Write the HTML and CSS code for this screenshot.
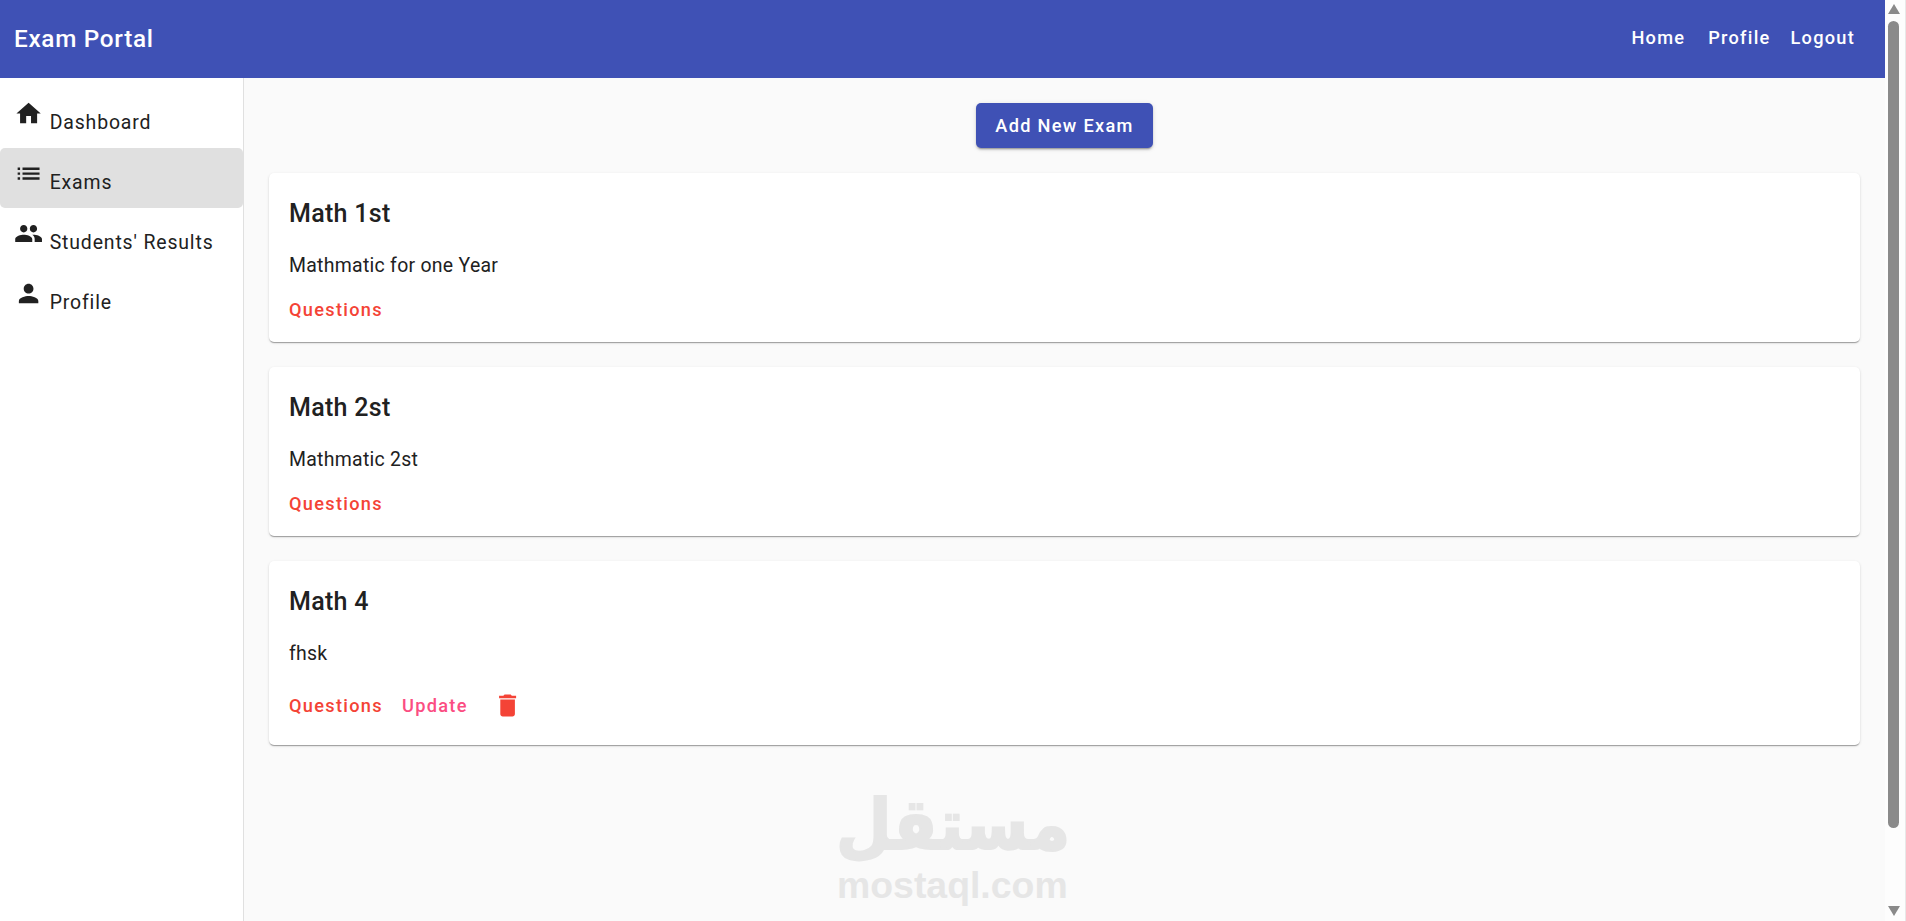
FILE: index.html
```html
<!DOCTYPE html>
<html lang="en">
<head>
<meta charset="utf-8">
<title>Exam Portal</title>
<link rel="stylesheet" href="styles.css">
</head>
<body>
<div class="window">
  <div class="app">
    <header class="topbar">
      <div class="brand">Exam Portal</div>
      <nav class="topnav">
        <a class="topnav-link topnav-home">Home</a>
        <a class="topnav-link">Profile</a>
        <a class="topnav-link">Logout</a>
      </nav>
    </header>
    <div class="body-row">
      <aside class="sidebar">
        <a class="side-item">
          <svg class="side-icon" viewBox="0 0 24 24"><path d="M10 20v-6h4v6h5v-8h3L12 3 2 12h3v8z"/></svg>
          <span class="side-label">Dashboard</span>
        </a>
        <a class="side-item side-item-active">
          <svg class="side-icon" viewBox="0 0 24 24"><path d="M3 13h2v-2H3v2zm0 4h2v-2H3v2zm0-8h2V7H3v2zm4 4h14v-2H7v2zm0 4h14v-2H7v2zM7 7v2h14V7H7z"/></svg>
          <span class="side-label">Exams</span>
        </a>
        <a class="side-item">
          <svg class="side-icon" viewBox="0 0 24 24"><path d="M16 11c1.66 0 2.99-1.34 2.99-3S17.66 5 16 5c-1.66 0-3 1.34-3 3s1.34 3 3 3zm-8 0c1.66 0 2.99-1.34 2.99-3S9.66 5 8 5C6.34 5 5 6.34 5 8s1.34 3 3 3zm0 2c-2.33 0-7 1.17-7 3.5V19h14v-2.5c0-2.33-4.67-3.5-7-3.5zm8 0c-.29 0-.62.02-.97.05 1.16.84 1.97 1.97 1.97 3.45V19h6v-2.5c0-2.33-4.67-3.5-7-3.5z"/></svg>
          <span class="side-label">Students' Results</span>
        </a>
        <a class="side-item">
          <svg class="side-icon" viewBox="0 0 24 24"><path d="M12 12c2.21 0 4-1.79 4-4s-1.79-4-4-4-4 1.79-4 4 1.79 4 4 4zm0 2c-2.67 0-8 1.34-8 4v2h16v-2c0-2.66-5.33-4-8-4z"/></svg>
          <span class="side-label">Profile</span>
        </a>
      </aside>
      <main class="content">
        <div class="toolbar"><button class="add-btn">Add New Exam</button></div>
        <section class="card">
          <h2 class="card-title">Math 1st</h2>
          <p class="card-text">Mathmatic for one Year</p>
          <div class="card-actions"><a class="action action-red">Questions</a></div>
        </section>
        <section class="card">
          <h2 class="card-title">Math 2st</h2>
          <p class="card-text">Mathmatic 2st</p>
          <div class="card-actions"><a class="action action-red">Questions</a></div>
        </section>
        <section class="card">
          <h2 class="card-title">Math 4</h2>
          <p class="card-text">fhsk</p>
          <div class="card-actions">
            <a class="action action-red">Questions</a>
            <a class="action action-pink">Update</a>
            <svg class="trash-icon" viewBox="0 0 24 24"><path d="M6 19c0 1.1.9 2 2 2h8c1.1 0 2-.9 2-2V7H6v12zM19 4h-3.5l-1-1h-5l-1 1H5v2h14V4z"/></svg>
          </div>
        </section>
        <div class="watermark">
          <div class="watermark-ar" lang="ar" dir="rtl">مستقل</div>
          <div class="watermark-en">mostaql.com</div>
        </div>
      </main>
    </div>
  </div>
  <div class="scrollbar">
    <div class="arrow-up"></div>
    <div class="thumb"></div>
    <div class="arrow-down"></div>
  </div>
</div>
</body>
</html>
```
FILE: styles.css
```css
* { box-sizing: border-box; }
html, body { margin: 0; height: 100%; overflow: hidden; }
body { font-family: Roboto, "Liberation Sans", sans-serif; background: #fafafa; color: #212121; }
.window { display: flex; height: 921px; width: 1906px; }
.app { flex: 1; min-width: 0; display: flex; flex-direction: column; }

.topbar { height: 78px; background: #3f51b5; color: #fff; display: flex; align-items: center; justify-content: space-between; padding: 0 30px 1px 14px; }
.brand { font-size: 24.3px; font-weight: 500; letter-spacing: 0.7px; }
.topnav { display: flex; gap: 20px; padding-bottom: 2px; }
.topnav-link { font-size: 18.2px; font-weight: 500; letter-spacing: 1.25px; }
.topnav-home { margin-right: 3px; }

.body-row { flex: 1; display: flex; min-height: 0; }
.sidebar { width: 244px; flex: none; background: #fff; border-right: 1px solid #e0e0e0; padding-top: 10px; }
.side-item { display: flex; align-items: flex-start; height: 60px; padding: 11px 0 0 14px; border-radius: 5px; color: #212121; }
.side-item-active { background: #e0e0e0; }
.side-icon { width: 29.2px; height: 29.2px; flex: none; fill: #212121; }
.side-label { font-size: 19.45px; letter-spacing: 0.85px; margin: 10px 0 0 6.5px; line-height: 28px; }

.content { flex: 1; min-width: 0; position: relative; padding: 25px 25px 0; }
.toolbar { display: flex; justify-content: center; margin-bottom: 25px; }
.add-btn { height: 45px; width: 177px; padding: 0 0 1px; border: 0; border-radius: 5px; background: #3f51b5; color: #fff; font: 500 18.2px Roboto, sans-serif; letter-spacing: 1.3px; box-shadow: 0 3px 1px -2px rgba(0,0,0,.2), 0 2px 2px 0 rgba(0,0,0,.14), 0 1px 5px 0 rgba(0,0,0,.12); }
.card { background: #fff; border-radius: 5px; padding: 22px 20px 15px; margin-bottom: 25px; box-shadow: 0 2px 1px -1px rgba(0,0,0,.2), 0 1px 1px 0 rgba(0,0,0,.14), 0 1px 3px 0 rgba(0,0,0,.12); }
.card-title { margin: 0 0 13px; font-size: 25px; line-height: 38px; font-weight: 500; letter-spacing: 0.3px; color: #212121; }
.card-text { margin: 0 0 7px; font-size: 19.45px; line-height: 40px; letter-spacing: 0.28px; color: #212121; }
.card-actions { display: flex; align-items: center; min-height: 34px; }
.action { font-size: 18.2px; font-weight: 500; letter-spacing: 1.3px; line-height: 34px; }
.action-red { color: #f44336; margin-right: 19px; }
.action-pink { color: #fb4d82; margin-right: 25px; }
.trash-icon { width: 29.2px; height: 49px; fill: #f44336; flex: none; }

.watermark { position: absolute; left: 593px; top: 713px; width: 230px; color: #e6e6e6; text-align: center; }
.watermark-ar { font: bold 64px/76px "DejaVu Sans", sans-serif; height: 76px; white-space: nowrap; -webkit-text-stroke: 2px #e6e6e6; transform: translateX(3px) scaleY(1.1); transform-origin: bottom; }
.watermark-en { font: bold 37.4px/36px "Liberation Sans", sans-serif; white-space: nowrap; }

.scrollbar { width: 21px; flex: none; background: #fdfdfd; position: relative; display: flex; flex-direction: column; align-items: center; padding: 4px 3px 5px 0; border-right: 1px solid #e8e8e8; }
.arrow-up { width: 0; height: 0; border-left: 6px solid transparent; border-right: 6px solid transparent; border-bottom: 10px solid #8a8a8a; flex: none; }
.thumb { width: 11px; height: 807px; margin-top: 7px; background: #8a8a8a; border-radius: 6px; flex: none; }
.arrow-down { width: 0; height: 0; border-left: 6px solid transparent; border-right: 6px solid transparent; border-top: 10px solid #8a8a8a; margin-top: auto; flex: none; }
```
